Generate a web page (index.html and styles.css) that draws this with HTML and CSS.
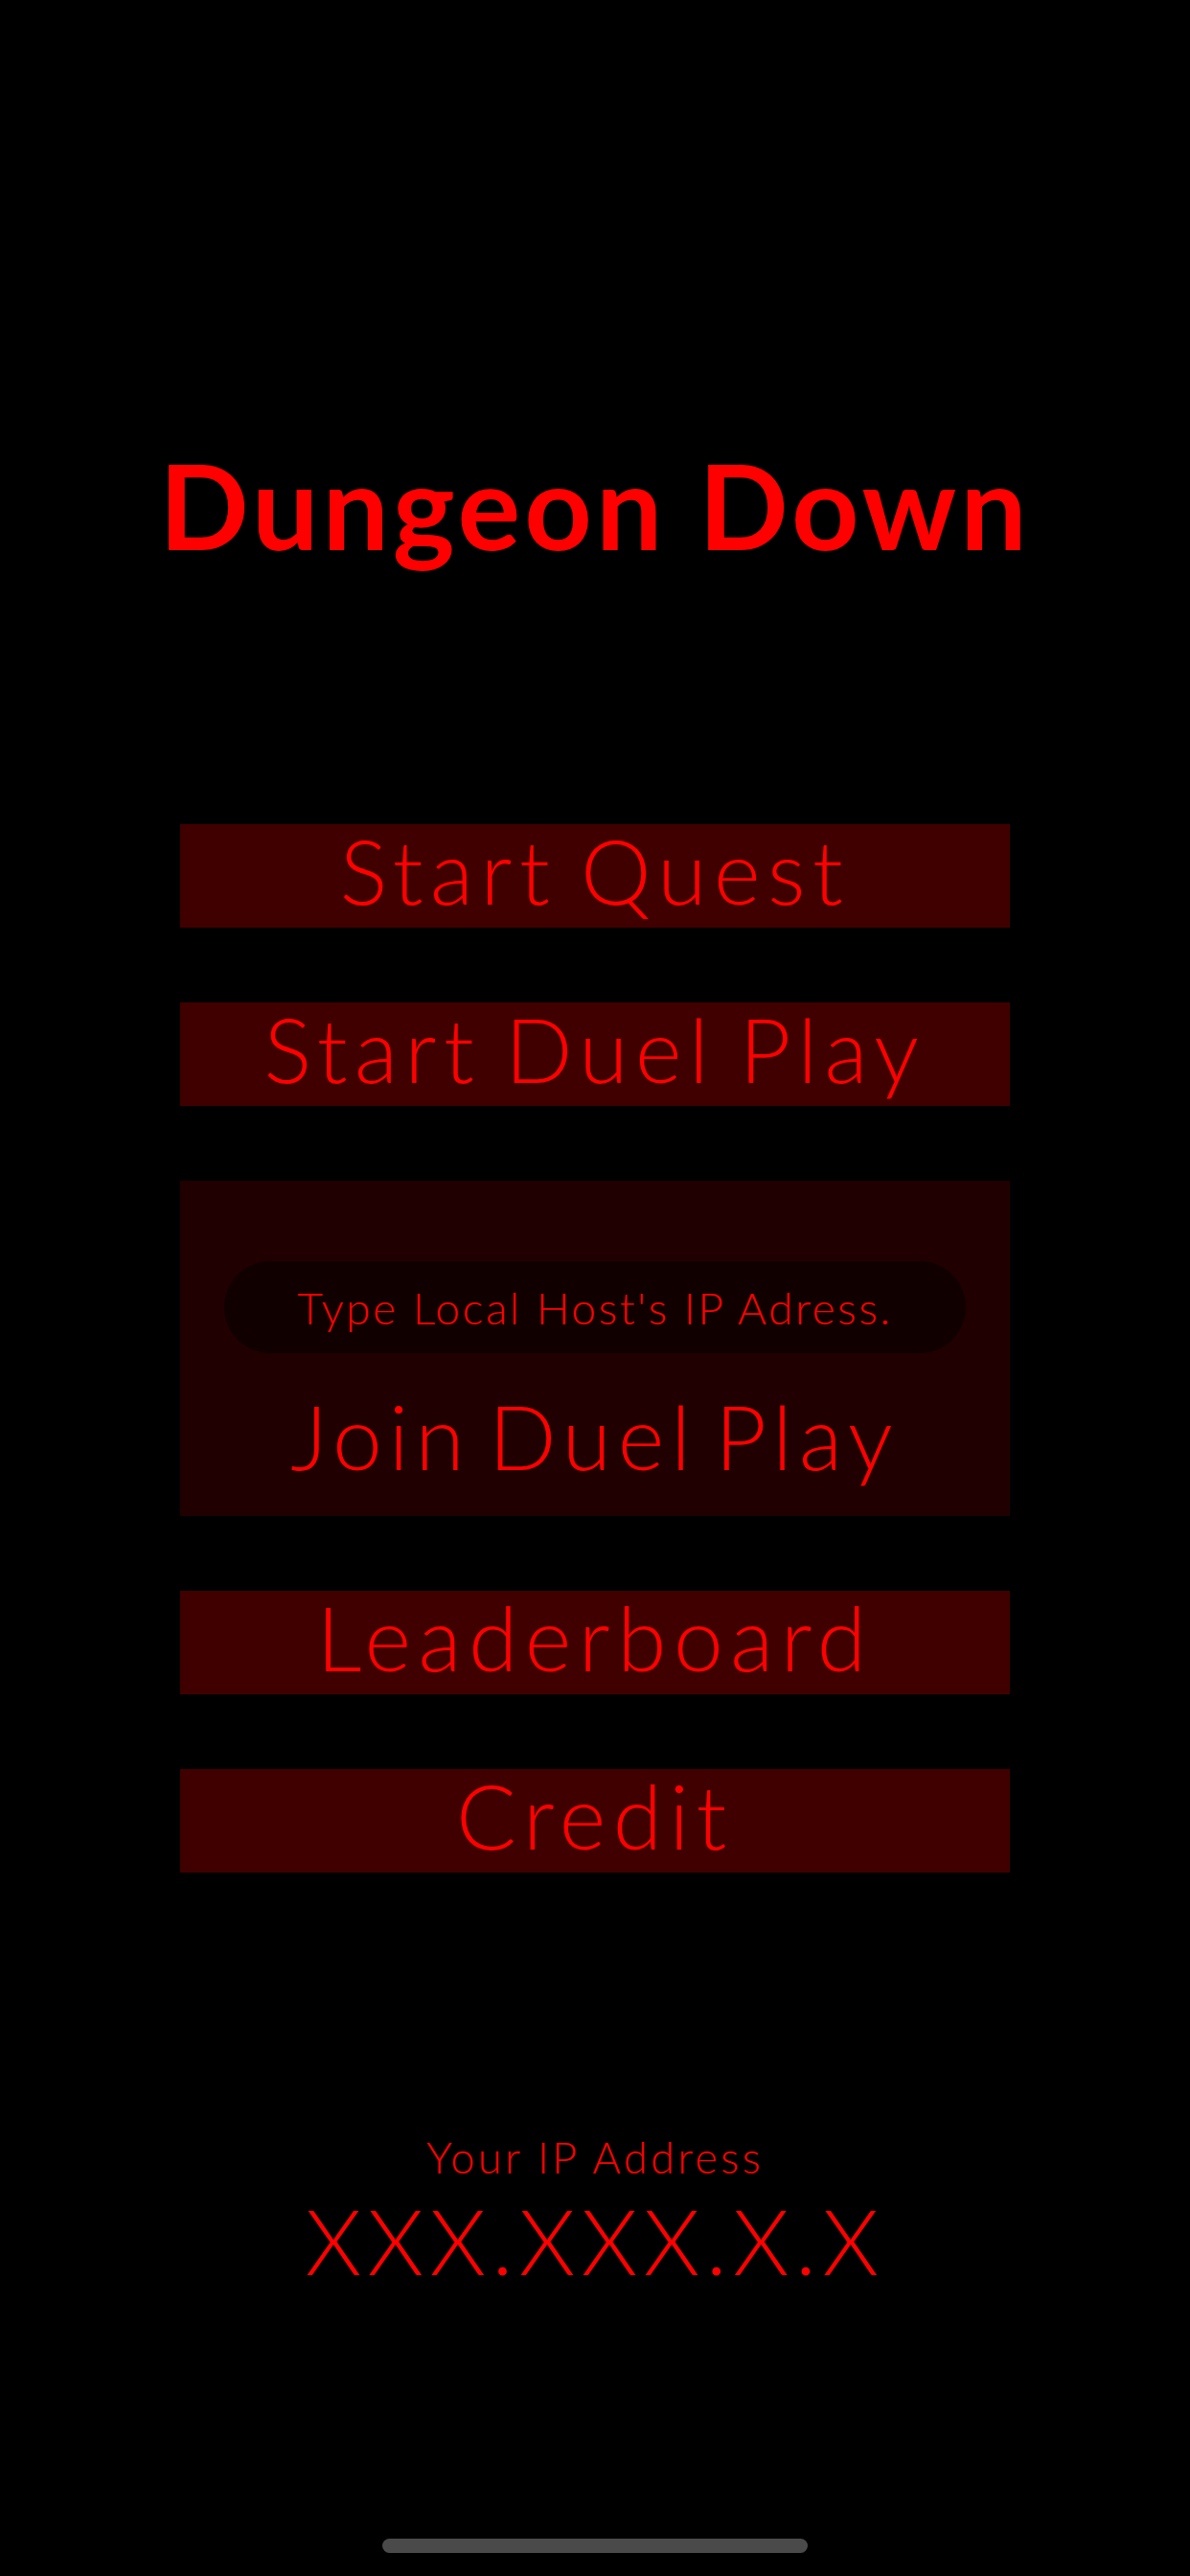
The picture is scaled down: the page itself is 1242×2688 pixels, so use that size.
FILE: index.html
```html
<!DOCTYPE html>
<html lang="en">
<head>
<meta charset="utf-8">
<title>Dungeon Down</title>
<link rel="stylesheet" href="styles.css">
</head>
<body>
<main class="screen">
  <h1 class="title">Dungeon Down</h1>
  <nav class="menu">
    <div class="btn">Start Quest</div>
    <div class="btn">Start Duel Play</div>
    <section class="join">
      <div class="ip-input" role="textbox">Type Local Host's IP Adress.</div>
      <div class="join-label">Join Duel Play</div>
    </section>
    <div class="btn">Leaderboard</div>
    <div class="btn">Credit</div>
  </nav>
  <section class="ip">
    <div class="ip-caption">Your IP Address</div>
    <div class="ip-value">XXX.XXX.X.X</div>
  </section>
  <div class="home-indicator"></div>
</main>
</body>
</html>
```
FILE: styles.css
```css
html, body {
  margin: 0;
  padding: 0;
  background: #000;
}

.screen {
  width: 1242px;
  height: 2688px;
  box-sizing: border-box;
  padding: 453px 0 24px;
  display: flex;
  flex-direction: column;
  align-items: center;
  font-family: Lato, "Liberation Sans", sans-serif;
  color: #ff0000;
}

.title {
  margin: 0;
  font-size: 123px;
  font-weight: 700;
  line-height: 148px;
  letter-spacing: 4px;
}

.menu {
  margin-top: 259px;
  width: 866px;
  display: flex;
  flex-direction: column;
  gap: 78px;
}

.btn {
  height: 108px;
  box-sizing: border-box;
  padding-bottom: 12px;
  background: #400000;
  display: flex;
  align-items: center;
  justify-content: center;
  font-size: 93px;
  font-weight: 300;
  line-height: 1;
  letter-spacing: 7.5px;
  word-spacing: -8px;
}

.join {
  height: 350px;
  box-sizing: border-box;
  padding: 84px 46px 0;
  background: #200000;
  display: flex;
  flex-direction: column;
  align-items: stretch;
}

.ip-input {
  height: 96px;
  box-sizing: border-box;
  padding-top: 2px;
  border-radius: 48px;
  background: #100000;
  display: flex;
  align-items: center;
  justify-content: center;
  font-size: 46px;
  font-weight: 300;
  line-height: 1;
  letter-spacing: 2.6px;
}

.join-label {
  margin-top: 40px;
  text-align: center;
  font-size: 93px;
  font-weight: 300;
  line-height: 1;
  letter-spacing: 7px;
  word-spacing: -14px;
}

.ip {
  margin-top: 275px;
  display: flex;
  flex-direction: column;
  align-items: center;
}

.ip-caption {
  font-size: 45px;
  font-weight: 300;
  line-height: 1;
  letter-spacing: 3.4px;
}

.ip-value {
  margin-top: 17px;
  font-size: 94px;
  font-weight: 300;
  line-height: 1;
  letter-spacing: 6.4px;
}

.home-indicator {
  margin-top: auto;
  width: 444px;
  height: 15px;
  border-radius: 8px;
  background: #4a4a4a;
}
```
